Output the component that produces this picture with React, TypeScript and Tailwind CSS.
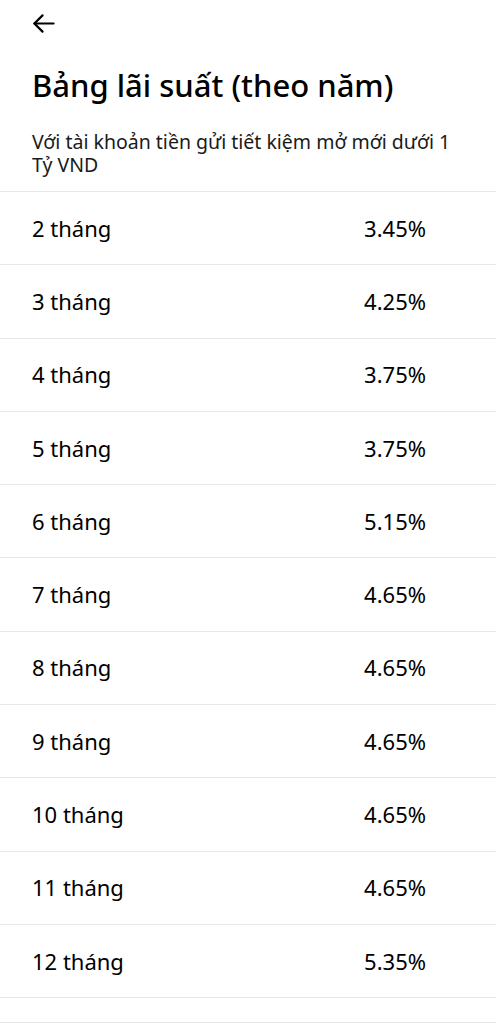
const rates = [
  { term: "2 tháng", rate: "3.45%" },
  { term: "3 tháng", rate: "4.25%" },
  { term: "4 tháng", rate: "3.75%" },
  { term: "5 tháng", rate: "3.75%" },
  { term: "6 tháng", rate: "5.15%" },
  { term: "7 tháng", rate: "4.65%" },
  { term: "8 tháng", rate: "4.65%" },
  { term: "9 tháng", rate: "4.65%" },
  { term: "10 tháng", rate: "4.65%" },
  { term: "11 tháng", rate: "4.65%" },
  { term: "12 tháng", rate: "5.35%" },
];

function BackArrow() {
  return (
    <svg width="23" height="23" viewBox="0 0 24 24" fill="none" stroke="currentColor" strokeWidth="2.3" strokeLinecap="round" strokeLinejoin="round">
      <path d="M22.5 12H2.5" />
      <path d="M11 3.5L2.5 12L11 20.5" />
    </svg>
  );
}

export default function App() {
  return (
    <div className="bg-white text-black min-h-screen font-['Noto_Sans',sans-serif]">
      <div className="px-8 pt-3">
        <BackArrow />
        <h1 className="mt-[31px] text-[31px] leading-[38px] font-medium">Bảng lãi suất (theo năm)</h1>
        <p className="mt-[26px] text-[19.5px] leading-[23px] text-[#1a1a1a]">
          Với tài khoản tiền gửi tiết kiệm mở mới dưới 1 Tỷ VND
        </p>
      </div>

      <div className="mt-[15px] border-t border-[#e8e8e8]">
        {rates.map((r) => (
          <div key={r.term} className="flex items-center h-[73.3px] border-b border-[#e8e8e8] pl-8 pr-[70px]">
            <span className="flex-1 text-[22px]">{r.term}</span>
            <span className="text-[22px]">{r.rate}</span>
          </div>
        ))}
        <div className="h-[25px] border-b border-[#e8e8e8]" />
      </div>
    </div>
  );
}
